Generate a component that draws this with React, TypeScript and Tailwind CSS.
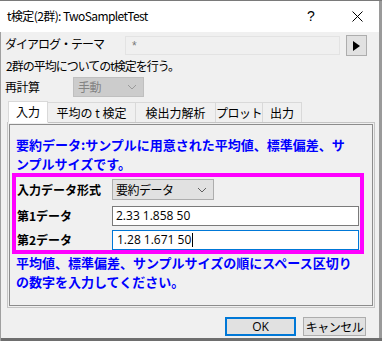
import React from "react";

const jp = { fontFamily: '"Noto Sans CJK JP", "Noto Sans", sans-serif' } as const;

function Chevron({ color = "#606060" }: { color?: string }) {
  return (
    <svg width="10" height="6" viewBox="0 0 10 6">
      <path d="M1 1 L5 5 L9 1" fill="none" stroke={color} strokeWidth="1" />
    </svg>
  );
}

export default function App() {
  return (
    <div
      className="relative w-[382px] h-[341px] overflow-hidden bg-[#f0f0f0] text-[12px] text-black flex flex-col"
      style={jp}
    >
      {/* right window edge */}
      <div className="absolute right-0 top-0 bottom-0 w-[3px] bg-[#9a9a9a]" />
      <div className="absolute left-0 top-0 right-0 h-px bg-[#7a7a7a]" />
      {/* title bar */}
      <div className="h-[32px] shrink-0 bg-white flex items-center pl-[7px] mr-[2px]">
        <span className="flex-1 tracking-[-0.6px] text-[12px]">t検定(2群): TwoSampletTest</span>
        <div className="w-[46px] h-[32px] flex items-center justify-center text-[14px]" style={{ fontFamily: '"Liberation Sans", sans-serif' }}>
          ?
        </div>
        <div className="w-[46px] h-[32px] flex items-center justify-center">
          <svg width="11" height="11" viewBox="0 0 11 11">
            <path d="M0.5 0.5 L10.5 10.5 M10.5 0.5 L0.5 10.5" stroke="#000" strokeWidth="1" />
          </svg>
        </div>
      </div>

      {/* theme row */}
      <div className="flex items-start pt-[4px] h-[24px] shrink-0">
        <span className="w-[125px] pl-[5px] leading-[14px] pt-[1px] tracking-[-1px]">ダイアログ・テーマ</span>
        <div className="w-[215px] h-[19px] border border-[#e3e3e3] bg-[#f0f0f0] flex items-center pl-[6px] text-[#7a7a7a] text-[12px]" style={{ fontFamily: '"Liberation Sans", sans-serif' }}>
          *
        </div>
        <div className="ml-[6px] w-[21px] h-[21px] -mt-[1px] border border-[#adadad] bg-[#e1e1e1] flex items-center justify-center">
          <svg width="7" height="10" viewBox="0 0 7 10">
            <path d="M0 0 L7 5 L0 10 Z" fill="#000" />
          </svg>
        </div>
      </div>

      {/* description */}
      <div className="h-[19px] shrink-0 pl-[6px] flex items-center tracking-[-1px]">
        2群の平均についてのt検定を行う。
      </div>

      {/* recalc row */}
      <div className="h-[22px] shrink-0 flex items-center pt-[2px]">
        <span className="w-[73px] pl-[5px] tracking-[-0.5px]">再計算</span>
        <div className="w-[71px] h-[20px] bg-[#cccccc] border border-[#bfbfbf] flex items-center justify-between pl-[4px] pr-[6px] text-[#838383] tracking-[-0.5px]">
          <span>手動</span>
          <Chevron color="#9a9a9a" />
        </div>
      </div>

      {/* tabs */}
      <div className="h-[21px] shrink-0 mt-[4px] flex items-end pl-[8px] relative z-10">
        <div className="w-[40px] h-[22px] bg-white border border-[#d9d9d9] border-b-white flex items-center justify-center -mb-px">
          入力
        </div>
        <div className="w-[88px] h-[20px] border-t border-r border-[#d9d9d9] bg-[#f0f0f0] flex items-center justify-center">
          平均の t 検定
        </div>
        <div className="w-[80px] h-[20px] border-t border-r border-[#d9d9d9] bg-[#f0f0f0] flex items-center justify-center">
          検出力解析
        </div>
        <div className="w-[47px] h-[20px] border-t border-r border-[#d9d9d9] bg-[#f0f0f0] flex items-center justify-center tracking-[-0.5px]">
          プロット
        </div>
        <div className="w-[39px] h-[20px] border-t border-r border-[#d9d9d9] bg-[#f0f0f0] flex items-center justify-center">
          出力
        </div>
      </div>

      {/* tab panel */}
      <div className="ml-[7px] w-[368px] h-[186px] shrink-0 border border-[#c4c4c4] bg-[#f0f0f0] p-px">
        <div className="w-full h-full border border-[#8c8c8c] flex flex-col">
          <div className="pl-[6px] pt-[10px] text-[13px] font-bold text-[#0000ff]">
            <div className="h-[19px] leading-[19px]">要約データ:サンプルに用意された平均値、標準偏差、サ</div>
            <div className="h-[19px] leading-[19px]">ンプルサイズです。</div>
          </div>
          {/* magenta box */}
          <div className="ml-[2px] mt-[0px] w-[352px] h-[81px] border-[4px] border-[#ff00ff] flex flex-col pl-px pt-[2px]">
            <div className="flex items-center h-[21px]">
              <span className="w-[95px] font-bold">入力データ形式</span>
              <div className="w-[102px] h-[21px] bg-[#e1e1e1] border border-[#adadad] flex items-center justify-between pl-[3px] pr-[6px] tracking-[-0.5px]">
                <span>要約データ</span>
                <Chevron />
              </div>
            </div>
            <div className="flex items-center h-[20px] mt-[6px]">
              <span className="w-[95px] font-bold">第1データ</span>
              <div className="w-[247px] h-[20px] bg-white border border-[#7a7a7a] flex items-center pl-[3px] text-[12px]" style={{ fontFamily: '"Open Sans", "Noto Sans", sans-serif' }}>
                2.33 1.858 50
              </div>
            </div>
            <div className="flex items-center h-[20px] mt-[4px]">
              <span className="w-[95px] font-bold">第2データ</span>
              <div className="w-[247px] h-[20px] bg-white border border-[#0078d7] flex items-center pl-[4px] text-[12px]" style={{ fontFamily: '"Open Sans", "Noto Sans", sans-serif' }}>
                1.28 1.671 50<span className="inline-block w-px h-[14px] bg-black ml-px" />
              </div>
            </div>
          </div>
          <div className="pl-[6px] -mt-px text-[13px] font-bold text-[#0000ff]">
            <div className="h-[19px] leading-[19px]">平均値、標準偏差、サンプルサイズの順にスペース区切り</div>
            <div className="h-[19px] leading-[19px]">の数字を入力してください。</div>
          </div>
        </div>
      </div>

      {/* buttons */}
      <div className="flex shrink-0 mt-[9px] pl-[225px]">
        <div className="w-[71px] h-[19px] bg-[#e1e1e1] border-2 border-[#0078d7] flex items-center justify-center" style={{ fontFamily: '"Open Sans", "Noto Sans", sans-serif' }}>
          OK
        </div>
        <div className="ml-[7px] w-[63px] h-[19px] bg-[#e1e1e1] border border-[#adadad] flex items-center justify-center tracking-[-0.5px]">
          キャンセル
        </div>
      </div>

      <div className="absolute left-0 right-0 bottom-0 h-[3px] bg-[#6e6e6e]" />
      <div className="absolute left-0 top-[32px] bottom-0 w-px bg-[#a0a0a0]" />
    </div>
  );
}
